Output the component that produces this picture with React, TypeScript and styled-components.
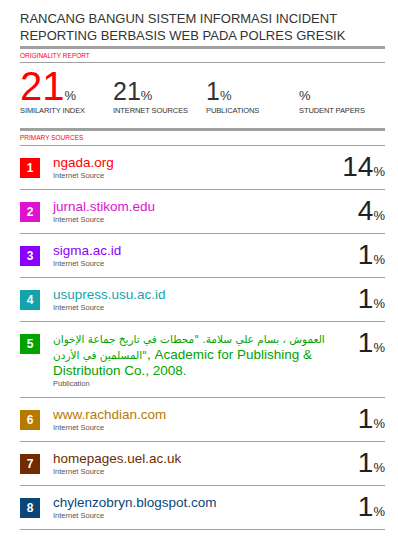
import React from "react";
import styled, { createGlobalStyle } from "styled-components";

const GlobalStyle = createGlobalStyle`
  html, body {
    margin: 0;
    padding: 0;
    background: #ffffff;
  }
  body {
    font-family: "Liberation Sans", Arial, "DejaVu Sans", sans-serif;
    color: #333333;
  }
`;

const ruleGray = "#a0a0a0";

interface Stat {
  value: string;
  label: string;
  big?: boolean;
}

interface Source {
  name: React.ReactNode;
  key: string;
  kind: string;
  percent: string;
  colour: string;
}

const ArabicText = styled.span`
  font-family: "DejaVu Sans", sans-serif;
  font-size: 10.5px;
  line-height: 1;
`;

const stats: Stat[] = [
  { value: "21", label: "SIMILARITY INDEX", big: true },
  { value: "21", label: "INTERNET SOURCES" },
  { value: "1", label: "PUBLICATIONS" },
  { value: "", label: "STUDENT PAPERS" },
];

const sources: Source[] = [
  { key: "ngada", name: "ngada.org", kind: "Internet Source", percent: "14", colour: "#ff0000" },
  { key: "stikom", name: "jurnal.stikom.edu", kind: "Internet Source", percent: "4", colour: "#e012d2" },
  { key: "sigma", name: "sigma.ac.id", kind: "Internet Source", percent: "1", colour: "#8a00ff" },
  { key: "usupress", name: "usupress.usu.ac.id", kind: "Internet Source", percent: "1", colour: "#14a3ab" },
  {
    key: "alamoush",
    name: (
      <>
        <ArabicText>العموش ، بسام علي سلامة. "محطات في تاريخ جماعة الإخوان المسلمين في الأردن"</ArabicText>
        , Academic for Publishing &amp; Distribution Co., 2008.
      </>
    ),
    kind: "Publication",
    percent: "1",
    colour: "#00a300",
  },
  { key: "rachdian", name: "www.rachdian.com", kind: "Internet Source", percent: "1", colour: "#b67a00" },
  { key: "uel", name: "homepages.uel.ac.uk", kind: "Internet Source", percent: "1", colour: "#702c00" },
  { key: "chylen", name: "chylenzobryn.blogspot.com", kind: "Internet Source", percent: "1", colour: "#0a467a" },
];

const Page = styled.div`
  width: 365px;
  padding: 10px 13px 0 20px;
`;

const Title = styled.h1`
  margin: 0 0 2px;
  font-size: 13px;
  line-height: 17px;
  font-weight: normal;
  color: #333333;
`;

const ThickRule = styled.div`
  height: 3px;
  background: ${ruleGray};
`;

const SectionLabel = styled.div<{ $height: number }>`
  font-size: 6.5px;
  line-height: ${({ $height }) => $height}px;
  color: #ff0000;
`;

const ThinRule = styled.div`
  height: 1px;
  background: ${ruleGray};
`;

const StatsGrid = styled.div`
  display: grid;
  grid-template-columns: repeat(4, 93px);
  align-items: baseline;
  padding: 3px 0 13px;
`;

const StatValue = styled.div<{ $big?: boolean }>`
  font-size: ${({ $big }) => ($big ? 40 : 25)}px;
  line-height: 1;
  color: ${({ $big }) => ($big ? "#ff0000" : "#333333")};
  white-space: nowrap;
`;

const StatPercent = styled.span`
  font-size: 13px;
  color: #333333;
`;

const StatLabel = styled.div`
  font-size: 7.5px;
  line-height: 9px;
  letter-spacing: -0.1px;
  color: #333333;
  white-space: nowrap;
`;

const SourceList = styled.div`
  border-top: 1px solid ${ruleGray};
`;

const SourceRow = styled.div`
  display: flex;
  align-items: flex-start;
  padding: 9px 0 8px;
  border-bottom: 1px solid ${ruleGray};
`;

const NumberBox = styled.div<{ $colour: string }>`
  flex: none;
  width: 20px;
  height: 20px;
  margin: 3px 13px 0 0;
  display: flex;
  align-items: center;
  justify-content: center;
  background: ${({ $colour }) => $colour};
  color: #ffffff;
  font-size: 12px;
  font-weight: bold;
`;

const SourceMain = styled.div`
  flex: 1;
  max-width: 272px;
`;

const SourceName = styled.div<{ $colour: string }>`
  font-size: 13.5px;
  line-height: 16px;
  color: ${({ $colour }) => $colour};
`;

const SourceKind = styled.div`
  font-size: 7.5px;
  line-height: 10px;
  color: #555555;
`;

const SourcePercent = styled.div`
  margin-left: auto;
  font-size: 28px;
  line-height: 24px;
  color: #222222;
  white-space: nowrap;
`;

const SmallPercent = styled.span`
  font-size: 13px;
  line-height: 1;
`;

const App = () => {
  return (
    <Page>
      <GlobalStyle />
      <Title>
        RANCANG BANGUN SISTEM INFORMASI INCIDENT REPORTING BERBASIS WEB PADA POLRES GRESIK
      </Title>
      <ThickRule />
      <SectionLabel $height={13}>ORIGINALITY REPORT</SectionLabel>
      <ThinRule />
      <StatsGrid>
        {stats.map((stat) => (
          <StatValue key={stat.label + "-v"} $big={stat.big}>
            {stat.value}
            <StatPercent>%</StatPercent>
          </StatValue>
        ))}
        {stats.map((stat) => (
          <StatLabel key={stat.label}>{stat.label}</StatLabel>
        ))}
      </StatsGrid>
      <ThickRule />
      <SectionLabel $height={14}>PRIMARY SOURCES</SectionLabel>
      <SourceList>
        {sources.map((source, i) => (
          <SourceRow key={source.key}>
            <NumberBox $colour={source.colour}>{i + 1}</NumberBox>
            <SourceMain>
              <SourceName $colour={source.colour}>{source.name}</SourceName>
              <SourceKind>{source.kind}</SourceKind>
            </SourceMain>
            <SourcePercent>
              {source.percent}
              <SmallPercent>%</SmallPercent>
            </SourcePercent>
          </SourceRow>
        ))}
      </SourceList>
    </Page>
  );
};

export default App;
